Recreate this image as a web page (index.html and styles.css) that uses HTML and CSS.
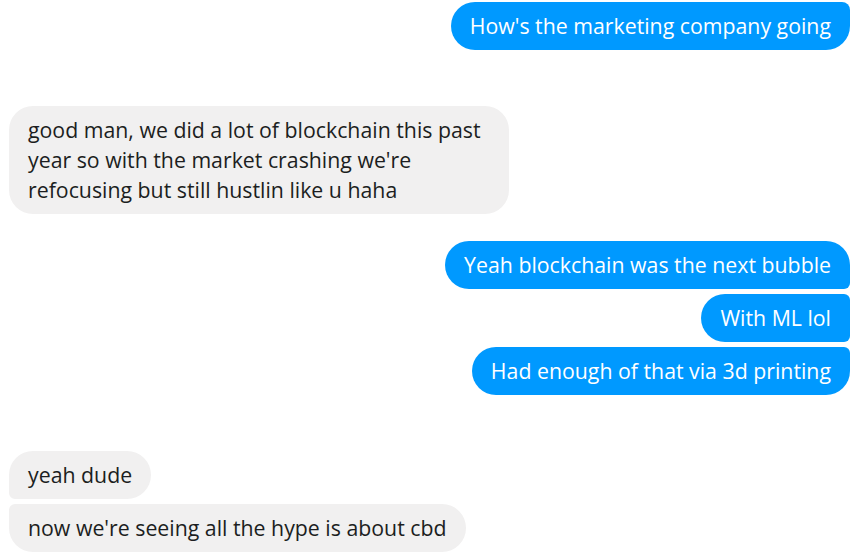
FILE: index.html
```html
<!DOCTYPE html>
<html lang="en">
<head>
  <meta charset="UTF-8"/>
  <title>Chat</title>
  <link rel="stylesheet" href="styles.css">
</head>
<body>
  <div class="chat">
    <div class="group mine">
      <div class="msg only">How's the marketing company going</div>
    </div>

    <div class="group theirs gap-lg">
      <div class="msg only">good man, we did a lot of blockchain this past year so with the market crashing we're refocusing but still hustlin like u haha</div>
    </div>

    <div class="group mine gap-sm">
      <div class="msg first">Yeah blockchain was the next bubble</div>
      <div class="msg middle">With ML lol</div>
      <div class="msg last">Had enough of that via 3d printing</div>
    </div>

    <div class="group theirs gap-lg">
      <div class="msg first">yeah dude</div>
      <div class="msg last">now we're seeing all the hype is about cbd</div>
    </div>
  </div>
</body>
</html>
```

FILE: styles.css
```css
body {
  margin: 0;
  padding: 0;
  background-color: #fff;
  font-family: 'Open Sans', sans-serif;
}

.chat {
  display: flex;
  flex-direction: column;
  padding: 2px 12px 0 9px;
}

.group {
  display: flex;
  flex-direction: column;
  gap: 5px;
}

.gap-lg { margin-top: 56px; }
.gap-sm { margin-top: 27px; }

.mine { align-items: flex-end; }
.theirs { align-items: flex-start; }

.msg {
  box-sizing: border-box;
  font-size: 21.3px;
  line-height: 30px;
  padding: 9px 19px;
  border-radius: 24px;
  max-width: 500px;
}

.mine .msg {
  background-color: #0099ff;
  color: #fff;
}

.theirs .msg {
  background-color: #f1f0f0;
  color: #1c1e21;
}

.mine .only { border-top-right-radius: 8px; }
.mine .first { border-bottom-right-radius: 6px; }
.mine .middle { border-top-right-radius: 6px; border-bottom-right-radius: 6px; }
.mine .last { border-top-right-radius: 6px; }

.theirs .first { border-bottom-left-radius: 6px; }
.theirs .last { border-top-left-radius: 6px; }
```
